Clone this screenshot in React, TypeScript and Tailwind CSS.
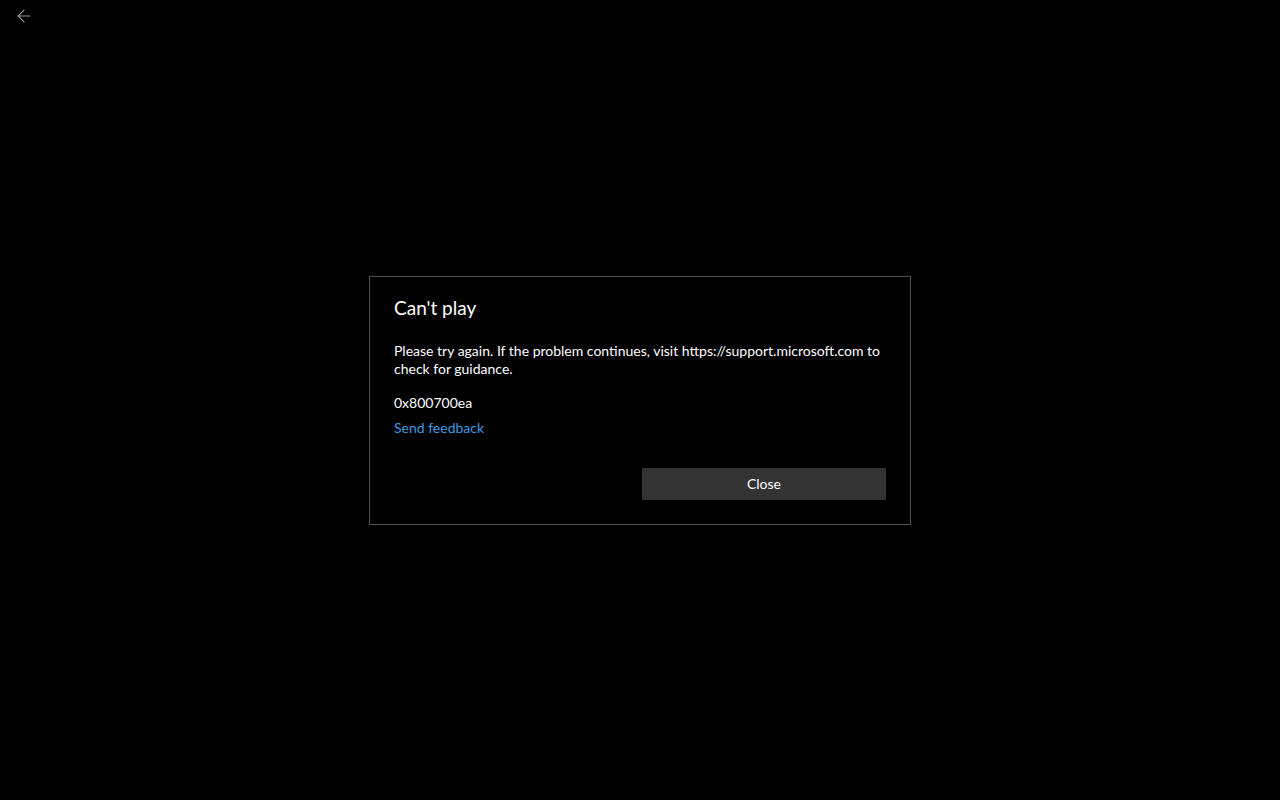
import { ArrowLeft } from "lucide-react";

const font = { fontFamily: '"Segoe UI", "Lato", "Noto Sans", sans-serif' };

export default function App() {
  return (
    <div className="relative h-[800px] w-[1280px] overflow-hidden bg-black text-white" style={font}>
      <header className="flex h-8 items-center pl-[14px]">
        <ArrowLeft className="h-5 w-5 text-[#9a9a9a]" strokeWidth={1.3} aria-hidden="true" />
      </header>

      <div className="pl-[369px] pt-[244px]">
        <div className="flex w-[542px] flex-col border border-[#4e4e4e] bg-black px-6 pb-6 pt-[17px]">
          <h1 className="text-[19px] leading-[28px] font-normal">Can't play</h1>
          <p className="mt-5 text-[14px] leading-[18px]">
            Please try again. If the problem continues, visit https://support.microsoft.com to
            <br />
            check for guidance.
          </p>
          <p className="mt-4 text-[14px] leading-[18px]">0x800700ea</p>
          <a className="mt-[7px] text-[14px] leading-[18px] text-[#3e9be4]" href="#">
            Send feedback
          </a>
          <div className="mt-[31px] flex justify-end">
            <button className="h-8 w-[244px] bg-[#333333] pb-px text-[14px] text-white" type="button">
              Close
            </button>
          </div>
        </div>
      </div>
    </div>
  );
}
